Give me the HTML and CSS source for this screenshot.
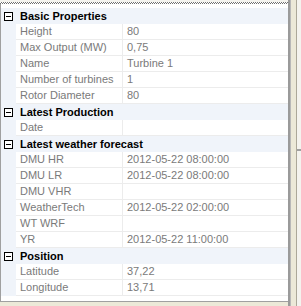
FILE: index.html
```html
<!DOCTYPE html>
<html lang="en">
<head>
    <meta charset="UTF-8">
    <meta name="viewport" content="width=device-width, initial-scale=1.0">
    <title>Turbine Properties</title>
    <link rel="stylesheet" href="styles.css">
</head>
<body>
    <div class="window">
        <div class="main">
            <div class="top-gap"></div>
            <div class="hatch"></div>
            <div class="grid">
                <div class="cat"><span class="toggle"></span>Basic Properties</div>
                <div class="prop"><div class="label">Height</div><div class="value">80</div></div>
                <div class="prop"><div class="label">Max Output (MW)</div><div class="value">0,75</div></div>
                <div class="prop"><div class="label">Name</div><div class="value">Turbine 1</div></div>
                <div class="prop"><div class="label">Number of turbines</div><div class="value">1</div></div>
                <div class="prop"><div class="label">Rotor Diameter</div><div class="value">80</div></div>

                <div class="cat"><span class="toggle"></span>Latest Production</div>
                <div class="prop"><div class="label">Date</div><div class="value"></div></div>

                <div class="cat"><span class="toggle"></span>Latest weather forecast</div>
                <div class="prop"><div class="label">DMU HR</div><div class="value">2012-05-22 08:00:00</div></div>
                <div class="prop"><div class="label">DMU LR</div><div class="value">2012-05-22 08:00:00</div></div>
                <div class="prop"><div class="label">DMU VHR</div><div class="value"></div></div>
                <div class="prop"><div class="label">WeatherTech</div><div class="value">2012-05-22 02:00:00</div></div>
                <div class="prop"><div class="label">WT WRF</div><div class="value"></div></div>
                <div class="prop"><div class="label">YR</div><div class="value">2012-05-22 11:00:00</div></div>

                <div class="cat"><span class="toggle"></span>Position</div>
                <div class="prop"><div class="label">Latitude</div><div class="value">37,22</div></div>
                <div class="prop"><div class="label">Longitude</div><div class="value">13,71</div></div>
            </div>
            <div class="foot"></div>
        </div>
        <div class="edge"></div>
        <div class="side-a"></div>
        <div class="side-line"></div>
        <div class="side-b"><div class="notch"></div></div>
    </div>
</body>
</html>
```

FILE: styles.css
```css
body {
    margin: 0;
    font-family: "Liberation Sans", Arial, sans-serif;
    font-size: 11px;
    background-color: #ece9d8;
}
.window {
    display: flex;
    width: 301px;
    height: 306px;
}
.main {
    width: 288px;
    display: flex;
    flex-direction: column;
}
.top-gap {
    height: 2px;
    background-color: #f4f3ee;
}
.hatch {
    height: 2px;
    background: repeating-conic-gradient(#6f6f6f 0 25%, #ffffff 0 50%) 0 0 / 2px 2px;
}
.grid {
    height: 298px;
    box-sizing: border-box;
    padding-top: 4px;
    background-color: #fff;
    border-left: 1px solid #a0a0a0;
    border-bottom: 1px solid #a0a0a0;
}
.foot {
    flex: 1;
    background-color: #ece9d8;
}
.cat {
    display: flex;
    align-items: center;
    height: 16px;
    background-color: #f0f4fa;
    font-weight: bold;
    color: #000;
}
.toggle {
    position: relative;
    width: 9px;
    height: 9px;
    box-sizing: border-box;
    margin: 0 7px 0 3px;
    border: 1px solid #000;
    background-color: #fff;
}
.toggle::after {
    content: "";
    position: absolute;
    left: 1px;
    top: 3px;
    width: 5px;
    height: 1px;
    background-color: #000;
}
.prop {
    display: flex;
    height: 16px;
    padding-left: 15px;
    background-color: #f0f4fa;
    color: #7a7a7a;
    line-height: 15px;
}
.label {
    width: 107px;
    box-sizing: border-box;
    padding-left: 4px;
    background-color: #fff;
    border-right: 1px solid #ececec;
    border-bottom: 1px solid #ececec;
    white-space: nowrap;
    overflow: hidden;
}
.value {
    flex: 1;
    padding-left: 4px;
    background-color: #fff;
    border-bottom: 1px solid #ececec;
    white-space: nowrap;
}
.edge {
    width: 3px;
    background: linear-gradient(to right, #9a9a9a 0 2px, #b8b8b8 2px);
}
.side-a {
    width: 5px;
    background-color: #ece9d8;
}
.side-line {
    width: 1px;
    background-color: #aca899;
}
.side-b {
    width: 4px;
    background-color: #f4f3ee;
}
.notch {
    margin-top: 149px;
    height: 2px;
    background-color: #a0a0a0;
}
```
